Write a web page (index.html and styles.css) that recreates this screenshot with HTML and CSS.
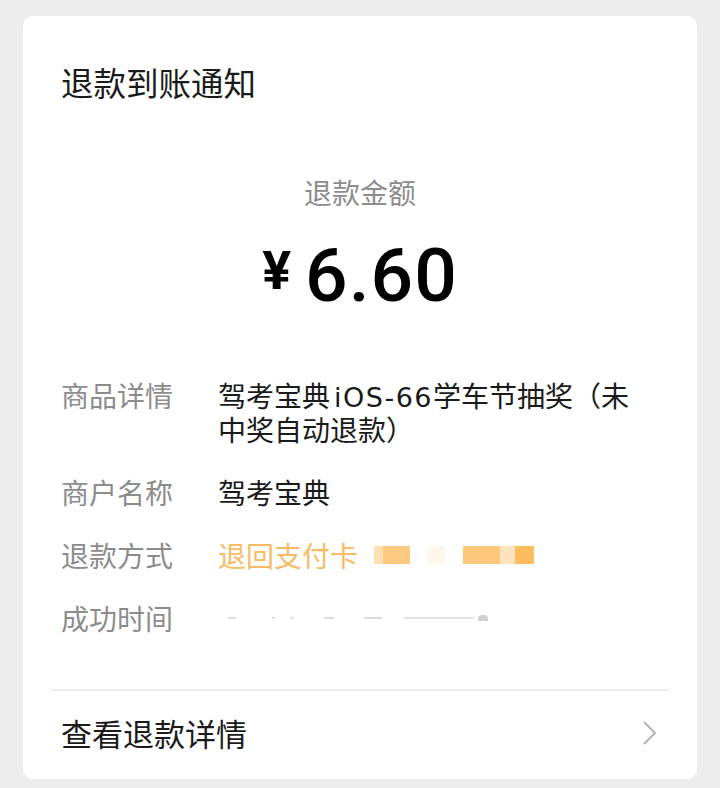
FILE: index.html
```html
<!DOCTYPE html>
<html lang="zh-CN">
<head>
    <meta charset="UTF-8">
    <meta name="viewport" content="width=device-width, initial-scale=1.0">
    <title>退款到账通知</title>
    <link rel="stylesheet" href="styles.css">
</head>
<body>

    <!-- Notice card -->
    <div class="card">
        <h1 class="card-title">退款到账通知</h1>

        <!-- Amount -->
        <div class="amount-box">
            <p class="amount-label">退款金额</p>
            <p class="amount"><span class="currency">¥</span><span class="amount-value">6.60</span></p>
        </div>

        <!-- Details -->
        <ul class="details">
            <li class="detail-row">
                <span class="detail-label">商品详情</span>
                <span class="detail-value">驾考宝典<span class="latin">iOS-66</span>学车节抽奖（未<br>中奖自动退款）</span>
            </li>
            <li class="detail-row">
                <span class="detail-label">商户名称</span>
                <span class="detail-value">驾考宝典</span>
            </li>
            <li class="detail-row">
                <span class="detail-label">退款方式</span>
                <span class="detail-value refund-way">退回支付卡
                    <span class="masked">
                        <i class="blur b1"></i><i class="blur b2"></i><i class="blur b3"></i><i class="blur b4"></i><i class="blur b5"></i><i class="blur b6"></i>
                    </span>
                </span>
            </li>
            <li class="detail-row">
                <span class="detail-label">成功时间</span>
                <span class="detail-value masked-time">
                    <i class="dot d1"></i><i class="dot d2"></i><i class="dot d3"></i><i class="dot d4"></i><i class="dot d5"></i><i class="dot d6"></i><i class="dot d7"></i>
                </span>
            </li>
        </ul>

        <!-- Footer link -->
        <a class="card-footer" href="#">
            <span>查看退款详情</span>
            <svg class="chevron" width="16" height="26" viewBox="0 0 16 26">
                <path d="M2 2 L13 13 L2 24" fill="none" stroke="#b3b3b3" stroke-width="2"/>
            </svg>
        </a>
    </div>

</body>
</html>
```

FILE: styles.css
```css
body {
    margin: 0;
    padding: 16px 23px 10px;
    background-color: #ededed;
    font-family: 'Noto Sans CJK SC', 'Noto Sans', sans-serif;
    color: #1a1a1a;
}

.card {
    background-color: #fff;
    border-radius: 10px;
    padding: 46px 28px 26px;
}

.card-title {
    margin: 0;
    padding: 0 10px;
    font-size: 32.5px;
    line-height: 40px;
    font-weight: normal;
}

.amount-box {
    margin-top: 72px;
    text-align: center;
}

.amount-label {
    margin: 0;
    font-size: 28px;
    line-height: 36px;
    color: #8c8c8c;
}

.amount {
    display: flex;
    justify-content: center;
    align-items: center;
    height: 80px;
    margin: 25px 0 0;
    font-family: 'Roboto', sans-serif;
    color: #000;
}

.currency {
    font-size: 54px;
    line-height: 60px;
    font-weight: bold;
    margin-right: 14px;
    margin-top: -8px;
}

.amount-value {
    font-size: 75px;
    line-height: 80px;
    font-weight: 500;
    letter-spacing: 1px;
}

.details {
    list-style: none;
    margin: 63px 0 0;
    padding: 0 10px;
}

.detail-row {
    display: flex;
    font-size: 28px;
    line-height: 34px;
    margin-bottom: 29px;
}

.detail-row:last-child {
    margin-bottom: 0;
}

.detail-label {
    flex: 0 0 157px;
    color: #8c8c8c;
}

.detail-value {
    flex: 1;
}

.latin {
    font-family: 'DejaVu Sans', sans-serif;
    font-size: 27px;
    line-height: 20px;
    letter-spacing: 1.5px;
    margin-left: 4px;
}

.refund-way {
    color: #f7bb63;
    display: flex;
    align-items: center;
}

.masked {
    display: flex;
    align-items: center;
    margin-left: 16px;
    height: 18px;
}

.blur {
    display: block;
    height: 18px;
}

.b1 { width: 9px; background: #fee0b3; }
.b2 { width: 27px; background: #fdca82; }
.b3 { width: 18px; background: #fff7ee; margin-left: 17px; }
.b4 { width: 37px; background: #fdc77c; margin-left: 18px; }
.b5 { width: 15px; background: #fee3bf; }
.b6 { width: 19px; background: #fdbc5e; }

.masked-time {
    display: flex;
    align-items: center;
    height: 34px;
}

.dot {
    display: block;
    height: 2px;
    background: #dcdcdc;
}

.d1 { width: 8px; margin-left: 10px; }
.d2 { width: 3px; margin-left: 36px; }
.d3 { width: 3px; margin-left: 16px; }
.d4 { width: 10px; margin-left: 30px; }
.d5 { width: 18px; margin-left: 30px; }
.d6 { width: 70px; margin-left: 22px; background: #e4e4e4; }
.d7 { width: 10px; height: 6px; margin-left: 4px; background: #d0d0d0; border-radius: 4px 4px 0 0; }

.card-footer {
    display: flex;
    justify-content: space-between;
    align-items: center;
    margin-top: 54px;
    padding: 22px 10px 0 10px;
    border-top: 2px solid #ececec;
    font-size: 31px;
    line-height: 40px;
    color: #1a1a1a;
    text-decoration: none;
}

.chevron {
    margin-right: 1px;
}
```
